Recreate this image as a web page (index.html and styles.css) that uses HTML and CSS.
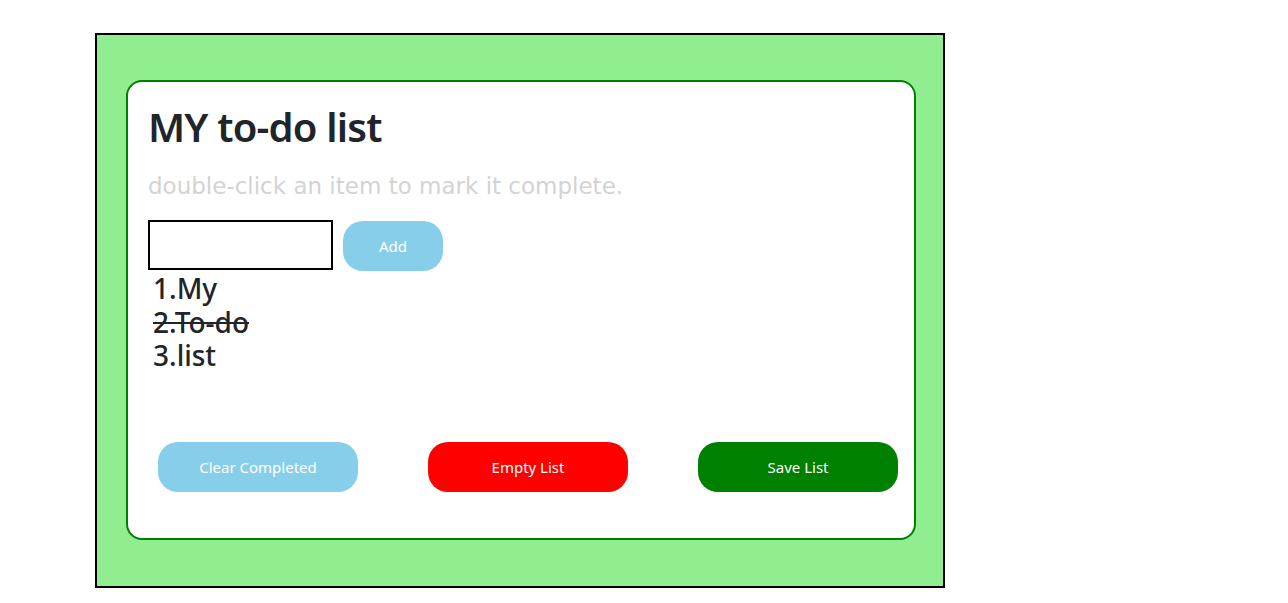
FILE: index.html
```html
<!DOCTYPE html>
<html>
<head>
<meta charset="utf-8">
<link rel="stylesheet" href="styles.css">
</head>
<body>
<div class="outer">
  <div class="card">
    <h1 class="title">MY to-do list</h1>
    <p class="hint">double-click an item to mark it complete.</p>
    <div class="entry">
      <input class="field" type="text">
      <button class="btn btn-add">Add</button>
    </div>
    <ul class="items">
      <li>1.My</li>
      <li class="done">2.To-do</li>
      <li>3.list</li>
    </ul>
    <div class="actions">
      <button class="btn btn-clear">Clear Completed</button>
      <button class="btn btn-empty">Empty List</button>
      <button class="btn btn-save">Save List</button>
    </div>
  </div>
</div>
</body>
</html>
```
FILE: styles.css
```css
html, body {
  margin: 0;
  padding: 0;
  background: #fff;
}
body {
  font-family: "Noto Sans", "Open Sans", sans-serif;
  color: #212529;
}
.outer {
  box-sizing: border-box;
  margin: 33px 0 0 95px;
  width: 850px;
  height: 555px;
  border: 2px solid #000;
  background: #90ee90;
  padding: 45px 0 0 29px;
}
.card {
  box-sizing: border-box;
  width: 790px;
  height: 460px;
  background: #fff;
  border: 2px solid #008000;
  border-radius: 16px;
  padding: 21px 20px 0 20px;
  display: flex;
  flex-direction: column;
}
.title {
  margin: 0;
  font-size: 40px;
  line-height: 48px;
  font-weight: 600;
  letter-spacing: -0.8px;
}
.hint {
  margin: 20px 0 0 0;
  font-family: "Comic Sans MS", "DejaVu Sans", sans-serif;
  font-size: 23px;
  line-height: 30px;
  color: #d3d3d3;
}
.entry {
  display: flex;
  align-items: flex-start;
  gap: 10px;
  margin-top: 19px;
}
.field {
  box-sizing: border-box;
  width: 185px;
  height: 50px;
  border: 2px solid #000;
  margin: 0;
  padding: 0 6px;
  font-size: 16px;
}
.btn {
  box-sizing: border-box;
  border: none;
  border-radius: 20px;
  color: #fff;
  font-family: "Noto Sans", "Open Sans", sans-serif;
  font-size: 15px;
  height: 50px;
  padding: 0;
  margin: 0;
  flex: none;
}
.btn-add {
  width: 100px;
  margin-top: 1px;
  background: #87ceeb;
}
.items {
  list-style: none;
  margin: 0;
  padding: 1px 0 0 5px;
  font-size: 28px;
  line-height: 33.5px;
  font-weight: 500;
}
.done {
  text-decoration: line-through;
}
.actions {
  display: flex;
  gap: 70px;
  margin-top: auto;
  margin-bottom: 46px;
  padding-left: 10px;
}
.btn-clear,
.btn-empty,
.btn-save {
  width: 200px;
}
.btn-clear { background: #87ceeb; }
.btn-empty { background: #ff0000; }
.btn-save { background: #008000; }
```
